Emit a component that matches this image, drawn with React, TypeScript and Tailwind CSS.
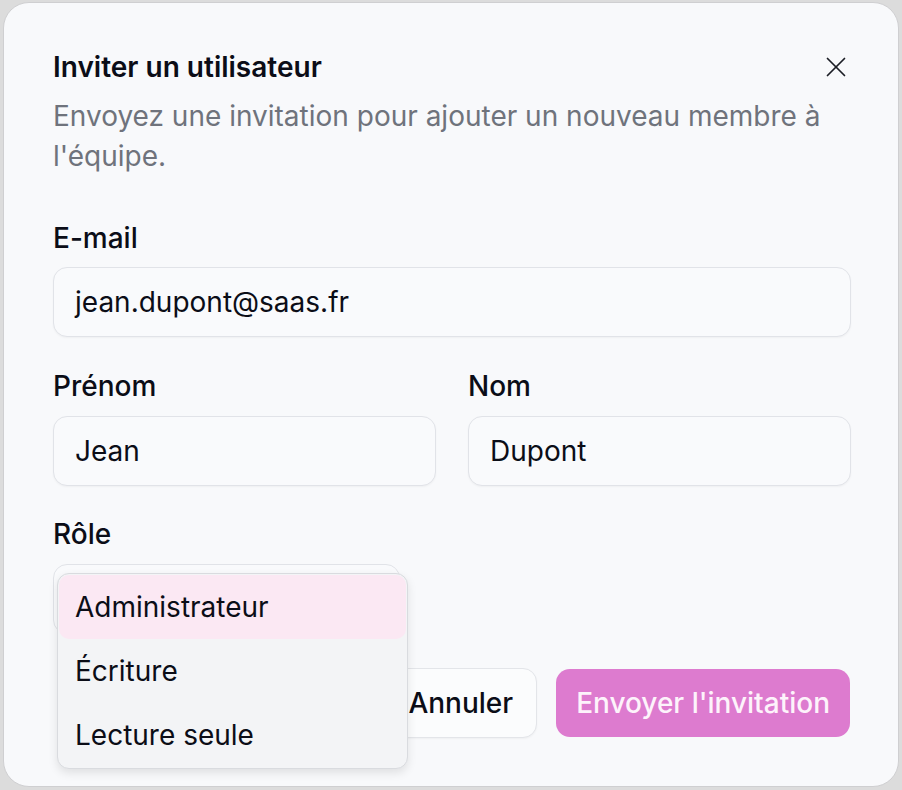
import React from "react";

function CloseIcon() {
  return (
    <svg width="20" height="20" viewBox="0 0 20 20" fill="none" stroke="#1b1d24" strokeWidth="1.7" strokeLinecap="round">
      <path d="M1.5 1.5 18.5 18.5" />
      <path d="M18.5 1.5 1.5 18.5" />
    </svg>
  );
}

function Field({
  label,
  value,
  className = "",
  gap = "mt-[15px]",
}: {
  label: string;
  value: string;
  className?: string;
  gap?: string;
}) {
  return (
    <div className={`flex flex-col ${className}`}>
      <label className="text-[28px] leading-[28px] font-medium text-[#0b0d17]">{label}</label>
      <div
        className={`${gap} flex h-[70px] items-center rounded-[14px] border border-[#e1e3e8] bg-[#f9fafc] pl-[21px] text-[28px] text-[#0b0d17] shadow-[0_1px_2px_rgba(0,0,0,0.04)]`}
      >
        {value}
      </div>
    </div>
  );
}

const roles = ["Administrateur", "Écriture", "Lecture seule"];

export default function App() {
  return (
    <div className="h-[790px] w-[902px] bg-[#dcdcdc] pl-[3px] pt-[2px] font-[Inter,sans-serif]">
      <div className="relative h-[785px] w-[896px] rounded-[26px] border border-[#cfcfd1] bg-[#f8f9fb] pl-[49px] pr-[47px] pt-[50px]">
        <button className="absolute right-[52px] top-[54px]" aria-label="Fermer">
          <CloseIcon />
        </button>

        <h2 className="text-[28px] leading-[28px] font-semibold text-[#0b0d17]">Inviter un utilisateur</h2>
        <p className="mt-[15px] pr-[20px] text-[28px] leading-[40px] text-[#6f737c]">
          Envoyez une invitation pour ajouter un nouveau membre à l'équipe.
        </p>

        <Field className="mt-[48px]" label="E-mail" value="jean.dupont@saas.fr" />

        <div className="mt-[35px] grid grid-cols-2 gap-[32px]">
          <Field label="Prénom" value="Jean" gap="mt-[16px]" />
          <Field label="Nom" value="Dupont" gap="mt-[16px]" />
        </div>

        <div className="mt-[34px] flex flex-col">
          <label className="text-[28px] leading-[28px] font-medium text-[#0b0d17]">Rôle</label>
          {/* select trigger; its value sits under the open menu */}
          <div className="mt-[16px] h-[70px] w-[347px] rounded-[14px] border border-[#e1e3e8] bg-[#f9fafc]" />
        </div>

        <div className="mt-[34px] flex items-center justify-end gap-[19px]">
          <button className="flex h-[70px] items-center rounded-[14px] border border-[#e3e5e9] bg-[#fbfcfd] px-[23px] text-[28px] font-medium text-[#0b0d17] shadow-[0_1px_2px_rgba(0,0,0,0.04)]">
            Annuler
          </button>
          <button className="mr-[1px] flex h-[68px] items-center rounded-[14px] bg-[#dd7bcf] px-[20px] text-[28px] font-medium text-[#fdf3fb]">
            Envoyer l'invitation
          </button>
        </div>

        {/* open role menu */}
        <div className="absolute left-[53px] top-[570px] w-[351px] rounded-[12px] border border-[#d9dbdf] bg-[#f3f4f6] p-[1px] shadow-[0_4px_10px_rgba(0,0,0,0.10)]">
          {roles.map((r, i) => (
            <div
              key={r}
              className={`flex h-[64px] items-center rounded-[10px] pl-[16px] text-[28px] text-[#0b0d17] ${
                i === 0 ? "bg-[#fbe8f3]" : ""
              }`}
            >
              {r}
            </div>
          ))}
        </div>
      </div>
    </div>
  );
}
